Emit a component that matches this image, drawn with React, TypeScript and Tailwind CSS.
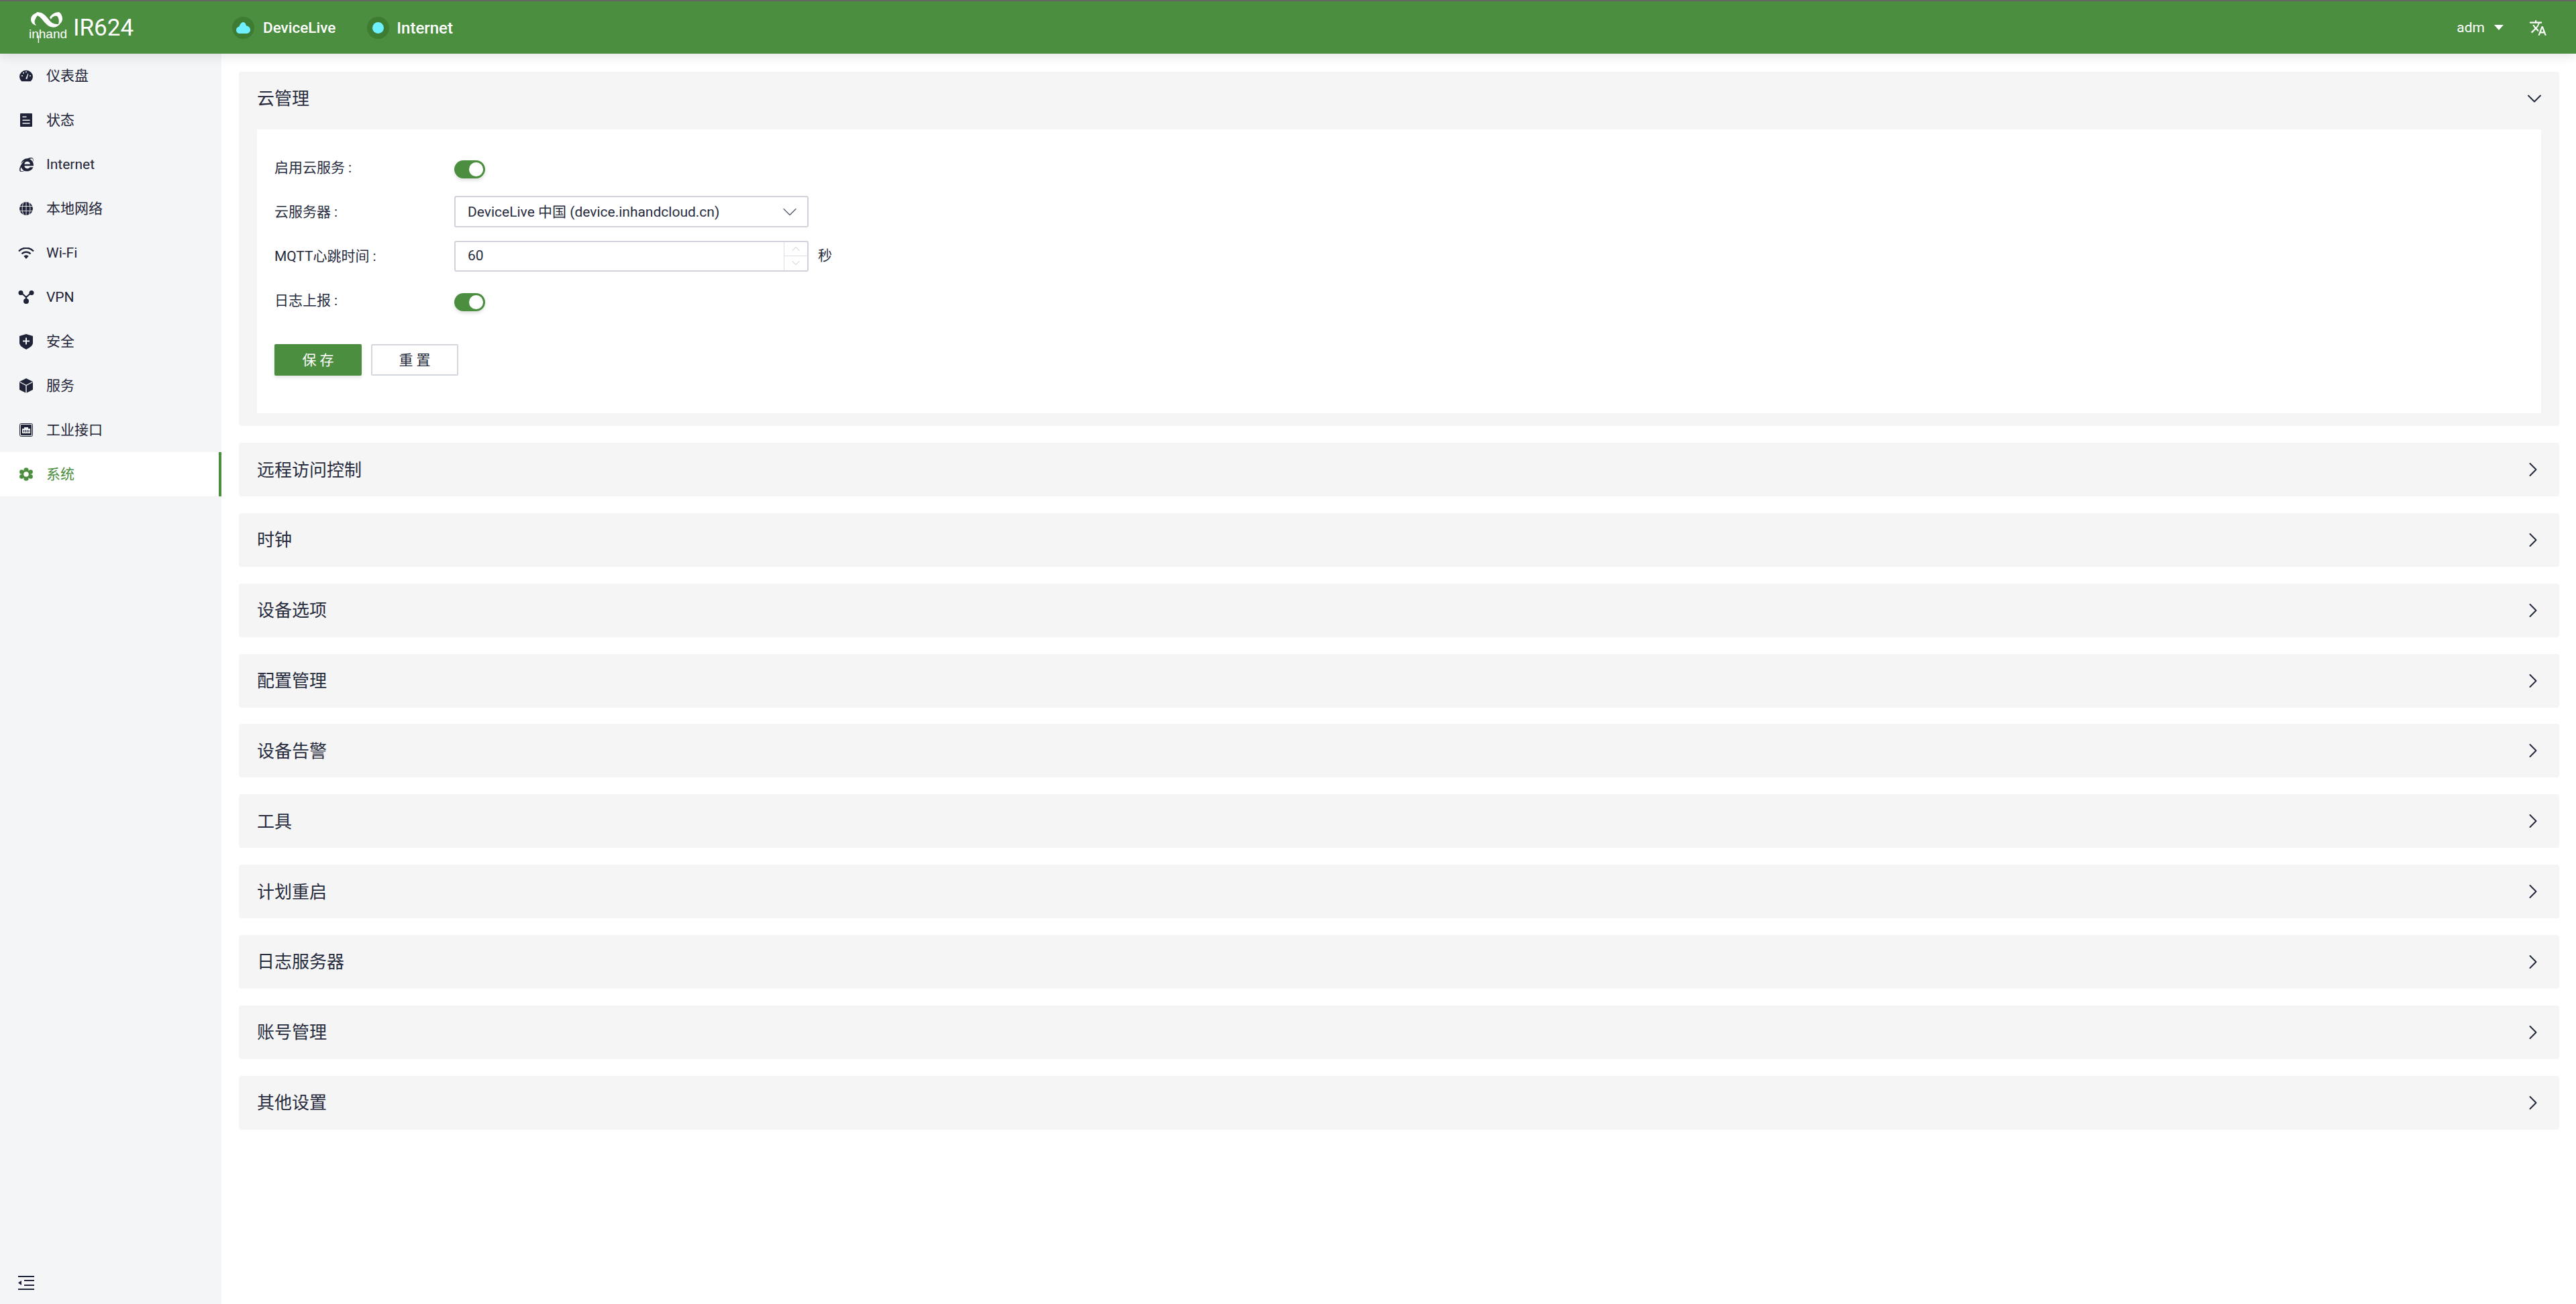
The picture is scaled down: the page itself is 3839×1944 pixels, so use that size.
import { FaInternetExplorer } from "react-icons/fa";
import { MdTranslate } from "react-icons/md";
import { ChevronDown, ChevronRight, ChevronUp } from "lucide-react";

const Dashboard = () => (
  <svg width="20" height="18" viewBox="0 0 20 18">
    <path d="M3.200 17.300A10 9.500 0 1 1 16.800 17.300z" fill="currentColor" />
    <path d="M9.200 13.500L12.500 5.500l0.800 0.300-2 8.200z" fill="#f4f5f7" />
    <circle cx="4" cy="9" r="1" fill="#f4f5f7" />
    <circle cx="6" cy="4.800" r="1" fill="#f4f5f7" />
    <circle cx="10" cy="3.200" r="1" fill="#f4f5f7" />
    <circle cx="16" cy="9" r="1" fill="#f4f5f7" />
  </svg>
);

const Status = () => (
  <svg width="18" height="20" viewBox="0 0 18 20">
    <rect width="18" height="20" rx="1" fill="currentColor" />
    <path d="M3.500 4.500h6V6h-6zM3.500 9.500h11V11h-11zM3.500 14h11v1.500h-11z" fill="#f4f5f7" />
  </svg>
);

const Globe = () => (
  <svg width="20" height="20" viewBox="0 0 20 20">
    <circle cx="10" cy="10" r="10" fill="currentColor" />
    <path
      d="M0 6.500h20M0 13.500h20M10 0v20M6 1c-2.500 5-2.500 13 0 18M14 1c2.500 5 2.500 13 0 18"
      stroke="#f4f5f7"
      strokeWidth="0.900"
      fill="none"
    />
  </svg>
);

const Wifi = () => (
  <svg width="24" height="17" viewBox="0 0 24 17">
    <path d="M1 5.500A15 15 0 0 1 23 5.500" stroke="currentColor" strokeWidth="2.400" fill="none" />
    <path d="M5.500 9.500A9 9 0 0 1 18.500 9.500" stroke="currentColor" strokeWidth="2.400" fill="none" />
    <path d="M12 17L8.300 12.800A5 5 0 0 1 15.700 12.800z" fill="currentColor" />
  </svg>
);

const Vpn = () => (
  <svg width="24" height="22" viewBox="0 0 24 22">
    <path d="M4 4l8 7 8-7M12 11v7" stroke="currentColor" strokeWidth="2.200" fill="none" />
    <circle cx="4" cy="4.500" r="3.500" fill="currentColor" />
    <circle cx="20" cy="4.500" r="3.500" fill="currentColor" />
    <circle cx="12" cy="17" r="4" fill="currentColor" />
  </svg>
);

const Shield = () => (
  <svg width="20" height="23" viewBox="0 0 20 23">
    <path d="M10 0l10 3v10c0 4-4 7-10 10C4 20 0 17 0 13V3z" fill="currentColor" />
    <path d="M5 10.500h10M10 5.500v10" stroke="#f4f5f7" strokeWidth="2" />
  </svg>
);

const Cube = () => (
  <svg width="20" height="22" viewBox="0 0 20 22">
    <path d="M10 0l10 5v12l-10 5-10-5V5z" fill="currentColor" />
    <path d="M0.500 5.500L10 10.500l9.500-5M10 10.500V22" stroke="#f4f5f7" strokeWidth="1.400" fill="none" />
  </svg>
);

const Port = () => (
  <svg width="20" height="20" viewBox="0 0 20 20">
    <rect x="0.500" y="0.500" width="19" height="19" rx="2" fill="none" stroke="currentColor" />
    <rect x="2" y="2" width="16" height="16" rx="1" fill="currentColor" />
    <path d="M4 8h3V6h6v2h3v7H4z" fill="#f4f5f7" />
    <path d="M6.500 10v3.500M9 10v3.500M11.500 10v3.500M14 10v3.500" stroke="currentColor" strokeWidth="1.200" />
  </svg>
);

const Gear = () => (
  <svg width="20" height="20" viewBox="0 0 20 20">
    <circle cx="10" cy="3.800" r="3.600" fill="currentColor" />
    <circle cx="10" cy="16.200" r="3.600" fill="currentColor" />
    <circle cx="3.300" cy="6.500" r="3.200" fill="currentColor" />
    <circle cx="16.700" cy="6.500" r="3.200" fill="currentColor" />
    <circle cx="3.300" cy="13.500" r="3.200" fill="currentColor" />
    <circle cx="16.700" cy="13.500" r="3.200" fill="currentColor" />
    <circle cx="10" cy="10" r="6.500" fill="currentColor" />
    <circle cx="10" cy="10" r="3.800" fill="#fff" />
  </svg>
);

const Collapse = () => (
  <svg width="24" height="21" viewBox="0 0 24 21">
    <path d="M0 0h24v2H0zM9 6h15v2H9zM9 13h15v2H9zM0 19h24v2H0z" fill="currentColor" />
    <path d="M0 10.500L5 7v7z" fill="currentColor" />
  </svg>
);

const Logo = () => (
  <div className="relative h-[52px] w-[60px] shrink-0">
    <svg width="60" height="52" viewBox="0 -2 60 52">
      <g fill="#fff">
        <path d="M15 2C8 3 5 8 5 12c0 4 3 8 8 9-3-4-3-7-1-10 1-3 3-6 7-8z" />
        <path d="M14 1c8 0 12 4 16 9s7 9 14 9h4c-4 5-10 6-16 3-5-3-9-9-13-13-2-2-4-3-7-4z" />
        <path d="M33 9c3-5 8-8 14-8 3 2 5 6 5 10s-3 8-7 10c3-5 2-11-1-14-4-1-8 2-9 5z" />
      </g>
      <path d="M16.400 36v11" stroke="#fff" strokeWidth="1.400" />
    </svg>
    <span className="absolute left-[2px] top-[24px] font-['Liberation_Sans',sans-serif] text-[19px] leading-[24px] text-white">
      inhand
    </span>
  </div>
);

const menu = [
  { label: "仪表盘", icon: <Dashboard /> },
  { label: "状态", icon: <Status /> },
  { label: "Internet", icon: <FaInternetExplorer size={21} /> },
  { label: "本地网络", icon: <Globe /> },
  { label: "Wi-Fi", icon: <Wifi /> },
  { label: "VPN", icon: <Vpn /> },
  { label: "安全", icon: <Shield /> },
  { label: "服务", icon: <Cube /> },
  { label: "工业接口", icon: <Port /> },
  { label: "系统", icon: <Gear />, active: true },
];

const sections = ["远程访问控制", "时钟", "设备选项", "配置管理", "设备告警", "工具", "计划重启", "日志服务器", "账号管理", "其他设置"];

const Toggle = () => (
  <div className="mt-[6px] flex h-[27px] w-[46px] items-center justify-end rounded-full bg-[#4b8e3f] pr-[3px] shadow-[0_3px_5px_rgba(0,0,0,0.12)]">
    <div className="h-[21px] w-[21px] rounded-full bg-white" />
  </div>
);

const FormRow = ({ label, children }: { label: string; children: React.ReactNode }) => (
  <div className="mb-[19px] flex h-[47px] items-center">
    <div className="mt-[2px] w-[268px] text-[21px] text-[#262b3d]">
      {label}
      <span className="ml-[5px]">:</span>
    </div>
    {children}
  </div>
);

export default function App() {
  return (
    <div className="flex h-screen w-screen flex-col overflow-hidden bg-white font-['Roboto','Noto_Sans_CJK_SC',sans-serif] text-[#262b3d]">
      <header className="relative z-10 flex h-[80px] shrink-0 items-center border-t-2 border-[#666666] bg-[#4b8e3f] text-white shadow-[0_4px_16px_rgba(0,0,0,0.1)]">
        <div className="ml-[41px] flex w-[305px] items-center gap-[8px]">
          <Logo />
          <span className="font-['Roboto',sans-serif] text-[35px] leading-none">IR624</span>
        </div>
        <div className="flex items-center gap-[13px]">
          <div className="flex h-[33px] w-[33px] items-center justify-center rounded-full bg-[#3e7b33]">
            <svg width="21" height="17" viewBox="0 0 21 17">
              <path d="M10.500 0c2.500 0 4 3 4.500 5.500C18 5.500 21 8 21 11.500S18 17 15 17H5c-3 0-5-2.500-5-5.500 0-2.500 2-4.500 4.500-5C5.500 3 8 0 10.500 0z" fill="#6ff0ff" />
            </svg>
          </div>
          <span className="mt-[2px] text-[22.5px] font-medium">DeviceLive</span>
        </div>
        <div className="ml-[47px] flex items-center gap-[11px]">
          <div className="flex h-[33px] w-[33px] items-center justify-center rounded-full bg-[#3e7b33]">
            <div className="h-[17px] w-[17px] rounded-full bg-[#6ff0ff]" />
          </div>
          <span className="mt-[2px] text-[24px] font-medium">Internet</span>
        </div>
        <div className="ml-auto flex items-center">
          <span className="mt-[2px] text-[21px]">adm</span>
          <div className="ml-[14px] h-0 w-0 border-x-[7px] border-t-[8px] border-x-transparent border-t-white" />
          <MdTranslate size={27} className="ml-[38px] mr-[43px]" />
        </div>
      </header>
      <div className="flex min-h-0 flex-1">
        <aside className="flex w-[330px] shrink-0 flex-col justify-between bg-[#f4f5f7]">
          <nav className="flex flex-col">
            {menu.map((m) => (
              <div
                key={m.label}
                className={
                  m.active
                    ? "flex h-[66px] items-center border-r-4 border-[#4b8e3f] bg-white text-[#4b8e3f]"
                    : "flex h-[66px] items-center text-[#1f2438]"
                }
              >
                <div className="flex w-[69px] justify-center pl-[20px] pr-[11px]">{m.icon}</div>
                <span className="mt-[1px] text-[21px]">{m.label}</span>
              </div>
            ))}
          </nav>
          <div className="mb-[21px] ml-[27px] text-[#1f2438]">
            <Collapse />
          </div>
        </aside>
        <main className="min-w-0 flex-1 pl-[26px] pr-[25px] pt-[27px]">
          <section className="mb-[25px] rounded-[4px] bg-[#f5f5f5] px-[27px] pb-[19px]">
            <div className="flex h-[86px] items-center justify-between pb-[6px]">
              <span className="text-[26px]">云管理</span>
              <ChevronDown size={36} strokeWidth={1.3} className="-mr-[8px] text-[#1f2438]" />
            </div>
            <div className="bg-white px-[26px] pb-[56px] pt-[33px]">
              <FormRow label="启用云服务">
                <Toggle />
              </FormRow>
              <FormRow label="云服务器">
                <div className="flex h-[47px] w-[528px] items-center justify-between rounded-[3px] border-2 border-[#d0d3dc] pl-[18px] pr-[8px] text-[21px]">
                  <span className="mt-[2px]">DeviceLive 中国 (device.inhandcloud.cn)</span>
                  <ChevronDown size={36} strokeWidth={0.9} className="text-[#555a6b]" />
                </div>
              </FormRow>
              <FormRow label="MQTT心跳时间">
                <div className="flex h-[46px] w-[528px] items-stretch justify-between rounded-[3px] border-2 border-[#d0d3dc] text-[21px]">
                  <span className="mt-[1px] self-center pl-[18px]">60</span>
                  <div className="flex w-[35px] flex-col border-l border-[#dcdee5] text-[#b3b7c2]">
                    <div className="flex flex-1 items-center justify-center border-b border-[#dcdee5]">
                      <ChevronUp size={20} strokeWidth={1} />
                    </div>
                    <div className="flex flex-1 items-center justify-center">
                      <ChevronDown size={20} strokeWidth={1} />
                    </div>
                  </div>
                </div>
                <span className="ml-[14px] text-[21px]">秒</span>
              </FormRow>
              <FormRow label="日志上报">
                <Toggle />
              </FormRow>
              <div className="mt-[42px] flex gap-[14px]">
                <button className="h-[47px] w-[130px] rounded-[2px] bg-[#4b8e3f] pl-[5px] pt-[2px] text-[21px] tracking-[5px] text-white shadow-[0_3px_5px_rgba(0,0,0,0.1)]">
                  保存
                </button>
                <button className="h-[47px] w-[130px] rounded-[2px] border-2 border-[#d4d6dd] bg-white pl-[5px] pt-[2px] text-[21px] tracking-[5px]">
                  重置
                </button>
              </div>
            </div>
          </section>
          {sections.map((s) => (
            <section key={s} className="mb-[24.85px] flex h-[80px] items-center justify-between rounded-[4px] bg-[#f5f5f5] px-[27px]">
              <span className="mt-[2px] text-[26px]">{s}</span>
              <ChevronRight size={36} strokeWidth={1.3} className="-mr-[6px] text-[#1f2438]" />
            </section>
          ))}
        </main>
      </div>
    </div>
  );
}
